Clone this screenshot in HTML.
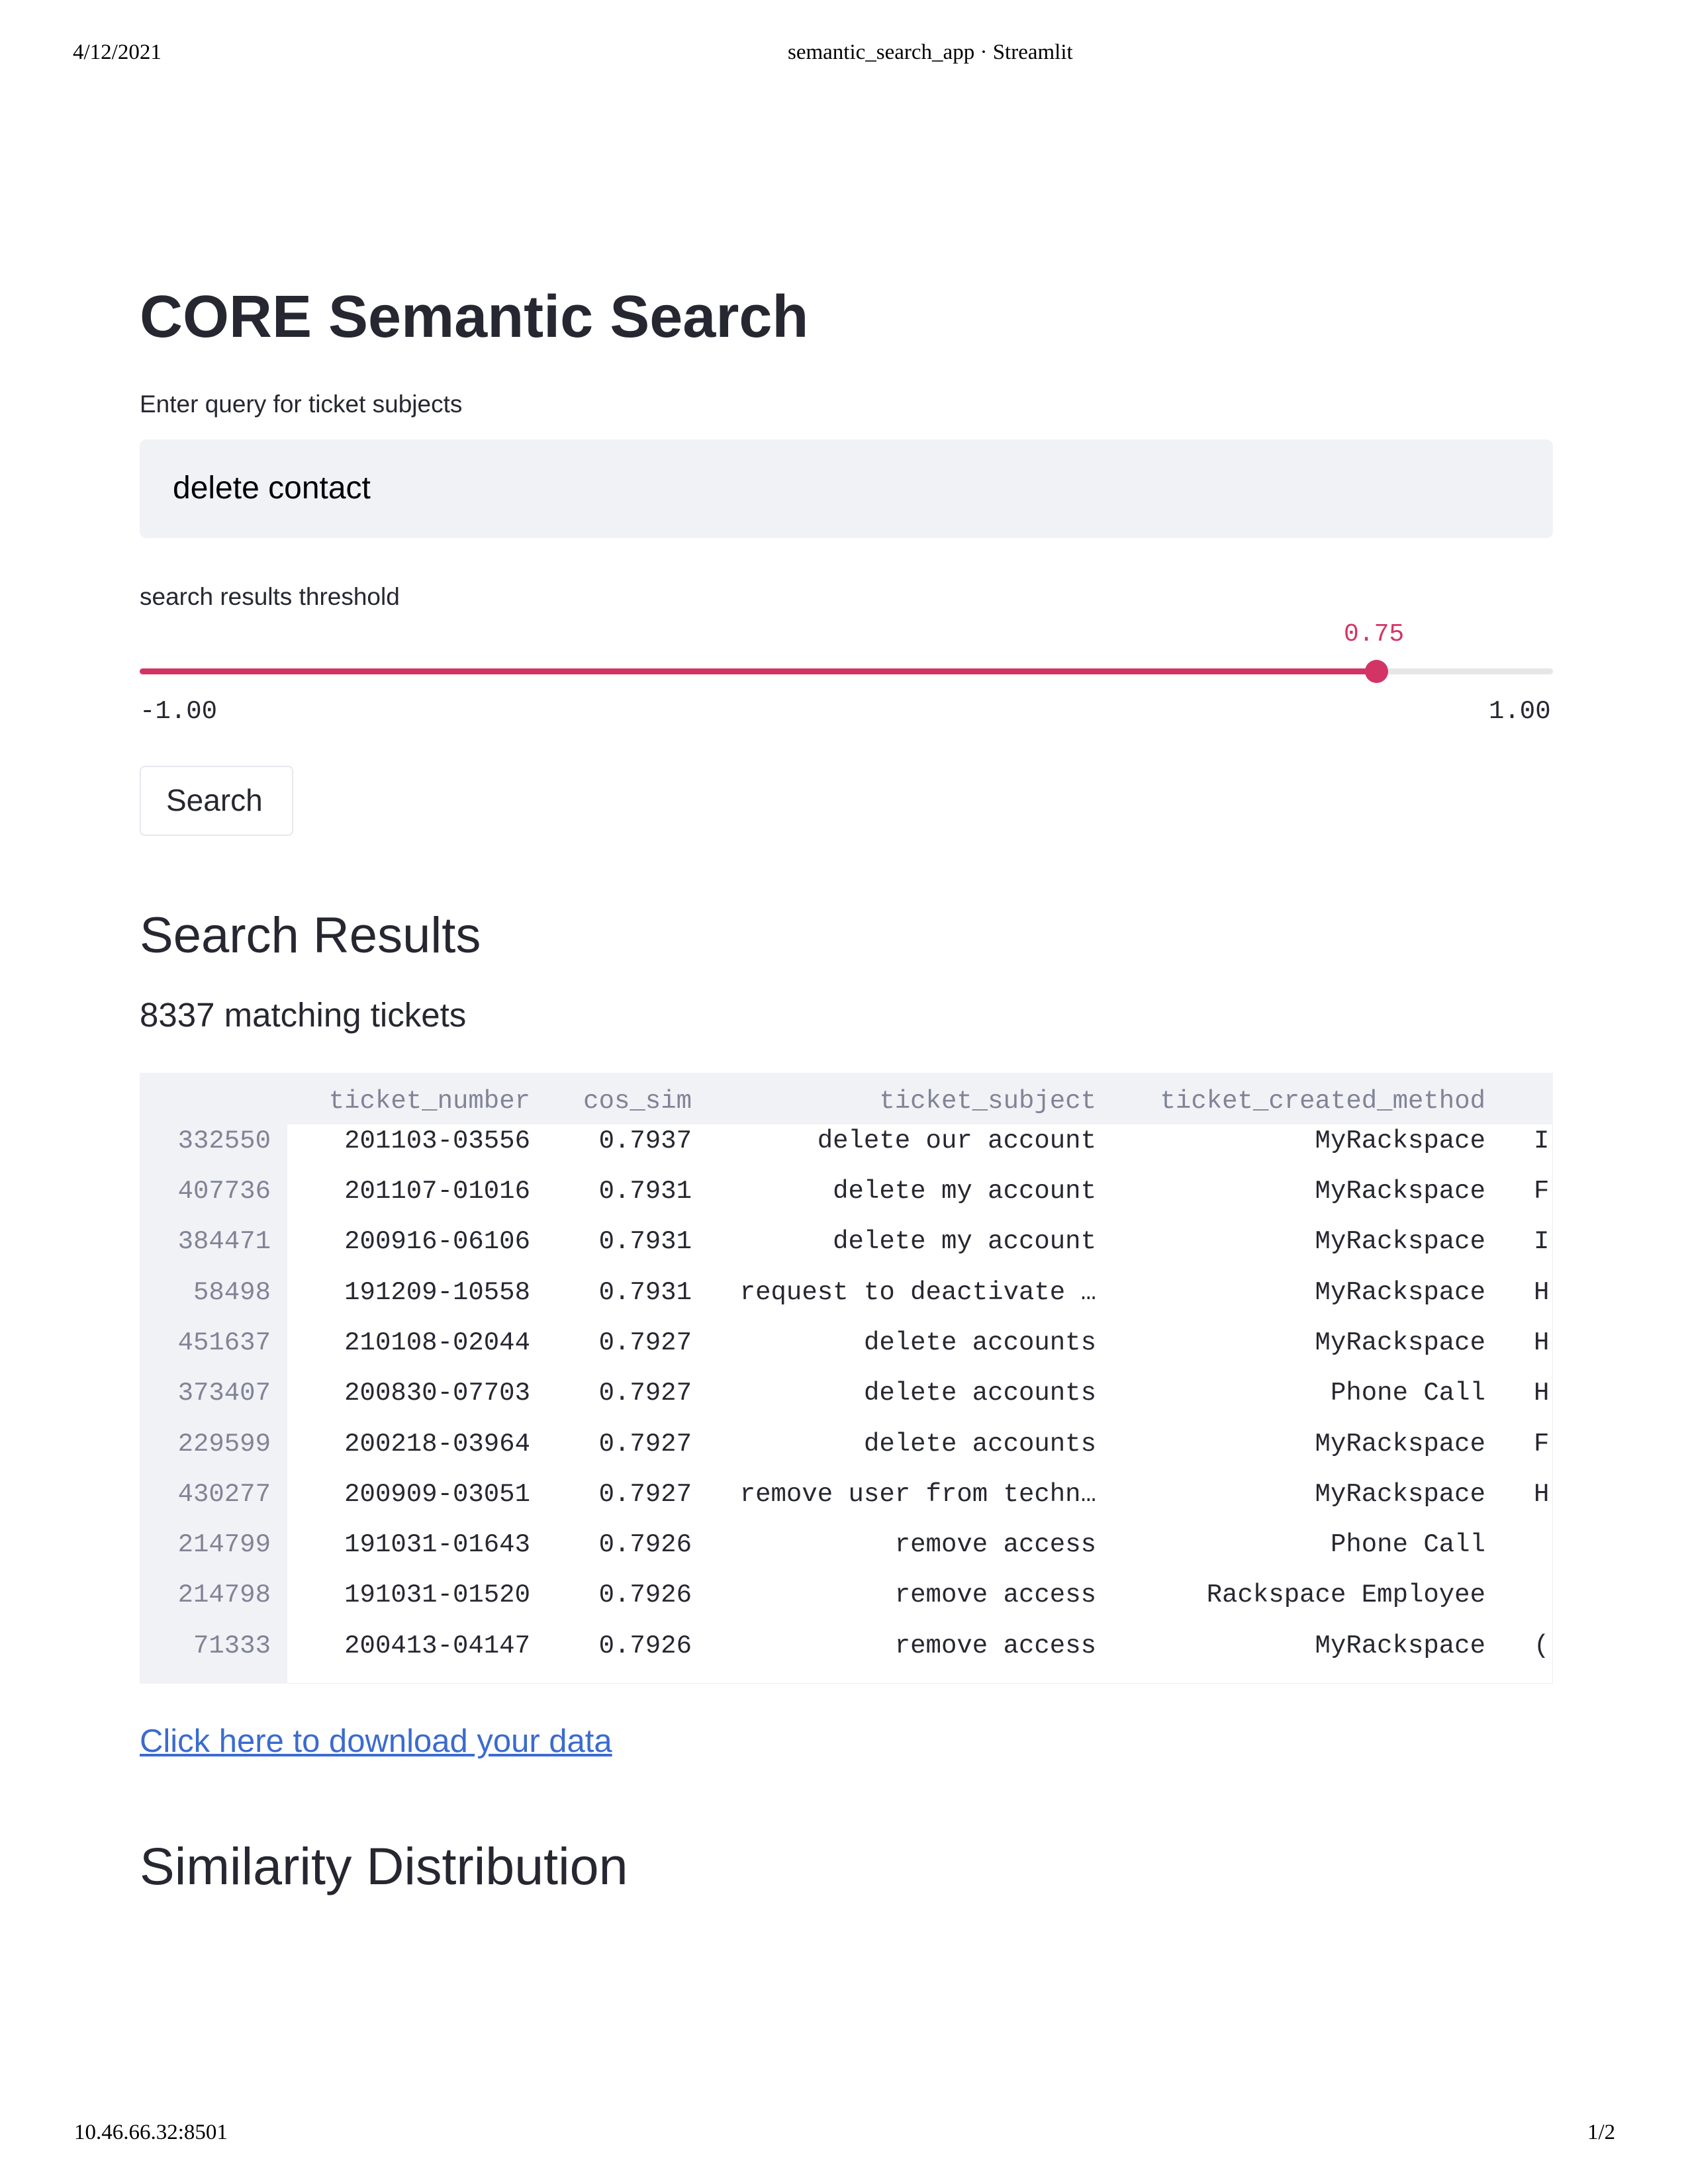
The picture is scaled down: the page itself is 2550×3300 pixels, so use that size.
<!DOCTYPE html>
<html><head><meta charset="utf-8"><style>
html,body{margin:0;padding:0;background:#fff;}
body{width:2550px;height:3300px;position:relative;overflow:hidden;font-family:"Liberation Sans",sans-serif;color:#262730;}
.a{position:absolute;white-space:nowrap;}
.serif{font-family:"Liberation Serif",serif;color:#000;font-size:33px;}
.mono{font-family:"Liberation Mono",monospace;}
.row{position:absolute;left:211px;width:2135px;height:76px;font-family:"Liberation Mono",monospace;font-size:39px;line-height:76px;}
.row span{position:absolute;text-align:right;white-space:nowrap;}
.c0{right:1937px;color:#808495;}
.c1{right:1545px;}
.c2{right:1301px;}
.c3{right:690px;}
.c4{right:102px;}
.c5{left:2106px;width:22px;overflow:hidden;text-align:left!important;}
</style></head><body>
<div class="a serif" style="left:110px;top:61px;">4/12/2021</div>
<div class="a serif" style="left:1190px;top:61px;">semantic_search_app · Streamlit</div>

<div class="a" style="left:211px;top:428px;font-size:90px;font-weight:bold;">CORE Semantic Search</div>
<div class="a" style="left:211px;top:590px;font-size:37px;">Enter query for ticket subjects</div>
<div class="a" style="left:211px;top:664px;width:2135px;height:149px;background:#f0f2f6;border-radius:10px;"></div>
<div class="a" style="left:261px;top:710px;font-size:48px;color:#000;">delete contact</div>

<div class="a" style="left:211px;top:881px;font-size:37px;">search results threshold</div>
<div class="a mono" style="left:2030px;top:937px;font-size:38px;color:#d33466;">0.75</div>
<div class="a" style="left:211px;top:1010px;width:2135px;height:9px;background:#e6e6e6;border-radius:5px;"></div>
<div class="a" style="left:211px;top:1010px;width:1869px;height:9px;background:#d33466;border-radius:5px;"></div>
<div class="a" style="left:2062px;top:997px;width:35px;height:35px;background:#d33466;border-radius:50%;"></div>
<div class="a mono" style="left:211px;top:1053px;font-size:39px;">-1.00</div>
<div class="a mono" style="left:2249px;top:1053px;font-size:39px;">1.00</div>

<div class="a" style="left:211px;top:1157px;width:228px;height:102px;border:2px solid #e6e8ee;border-radius:8px;"></div>
<div class="a" style="left:251px;top:1182px;font-size:46px;">Search</div>

<div class="a" style="left:211px;top:1370px;font-size:76px;">Search Results</div>
<div class="a" style="left:211px;top:1504px;font-size:51px;">8337 matching tickets</div>

<div class="a" style="left:211px;top:1621px;width:2133px;height:921px;border:1px solid #eceef3;"></div>
<div class="a" style="left:211px;top:1621px;width:2135px;height:78px;background:#f0f2f6;"></div>
<div class="a" style="left:211px;top:1621px;width:223px;height:923px;background:#f0f2f6;"></div>
<div class="row" style="top:1624px;color:#808495;line-height:80px;">
<span class="c1">ticket_number</span><span class="c2">cos_sim</span><span class="c3">ticket_subject</span><span class="c4">ticket_created_method</span></div>

<div class="row" style="top:1686px;"><span class="c0">332550</span><span class="c1">201103-03556</span><span class="c2">0.7937</span><span class="c3">delete our account</span><span class="c4">MyRackspace</span><span class="c5">I</span></div>
<div class="row" style="top:1762px;"><span class="c0">407736</span><span class="c1">201107-01016</span><span class="c2">0.7931</span><span class="c3">delete my account</span><span class="c4">MyRackspace</span><span class="c5">F</span></div>
<div class="row" style="top:1838px;"><span class="c0">384471</span><span class="c1">200916-06106</span><span class="c2">0.7931</span><span class="c3">delete my account</span><span class="c4">MyRackspace</span><span class="c5">I</span></div>
<div class="row" style="top:1915px;"><span class="c0">58498</span><span class="c1">191209-10558</span><span class="c2">0.7931</span><span class="c3">request to deactivate …</span><span class="c4">MyRackspace</span><span class="c5">H</span></div>
<div class="row" style="top:1991px;"><span class="c0">451637</span><span class="c1">210108-02044</span><span class="c2">0.7927</span><span class="c3">delete accounts</span><span class="c4">MyRackspace</span><span class="c5">H</span></div>
<div class="row" style="top:2067px;"><span class="c0">373407</span><span class="c1">200830-07703</span><span class="c2">0.7927</span><span class="c3">delete accounts</span><span class="c4">Phone Call</span><span class="c5">H</span></div>
<div class="row" style="top:2144px;"><span class="c0">229599</span><span class="c1">200218-03964</span><span class="c2">0.7927</span><span class="c3">delete accounts</span><span class="c4">MyRackspace</span><span class="c5">F</span></div>
<div class="row" style="top:2220px;"><span class="c0">430277</span><span class="c1">200909-03051</span><span class="c2">0.7927</span><span class="c3">remove user from techn…</span><span class="c4">MyRackspace</span><span class="c5">H</span></div>
<div class="row" style="top:2296px;"><span class="c0">214799</span><span class="c1">191031-01643</span><span class="c2">0.7926</span><span class="c3">remove access</span><span class="c4">Phone Call</span></div>
<div class="row" style="top:2372px;"><span class="c0">214798</span><span class="c1">191031-01520</span><span class="c2">0.7926</span><span class="c3">remove access</span><span class="c4">Rackspace Employee</span></div>
<div class="row" style="top:2449px;"><span class="c0">71333</span><span class="c1">200413-04147</span><span class="c2">0.7926</span><span class="c3">remove access</span><span class="c4">MyRackspace</span><span class="c5">(</span></div>

<div class="a" style="left:211px;top:2603px;font-size:49px;color:#3b6bcf;text-decoration:underline;">Click here to download your data</div>
<div class="a" style="left:211px;top:2774px;font-size:79px;">Similarity Distribution</div>

<div class="a serif" style="left:112px;top:3204px;">10.46.66.32:8501</div>
<div class="a serif" style="left:2398px;top:3204px;">1/2</div>
</body></html>
